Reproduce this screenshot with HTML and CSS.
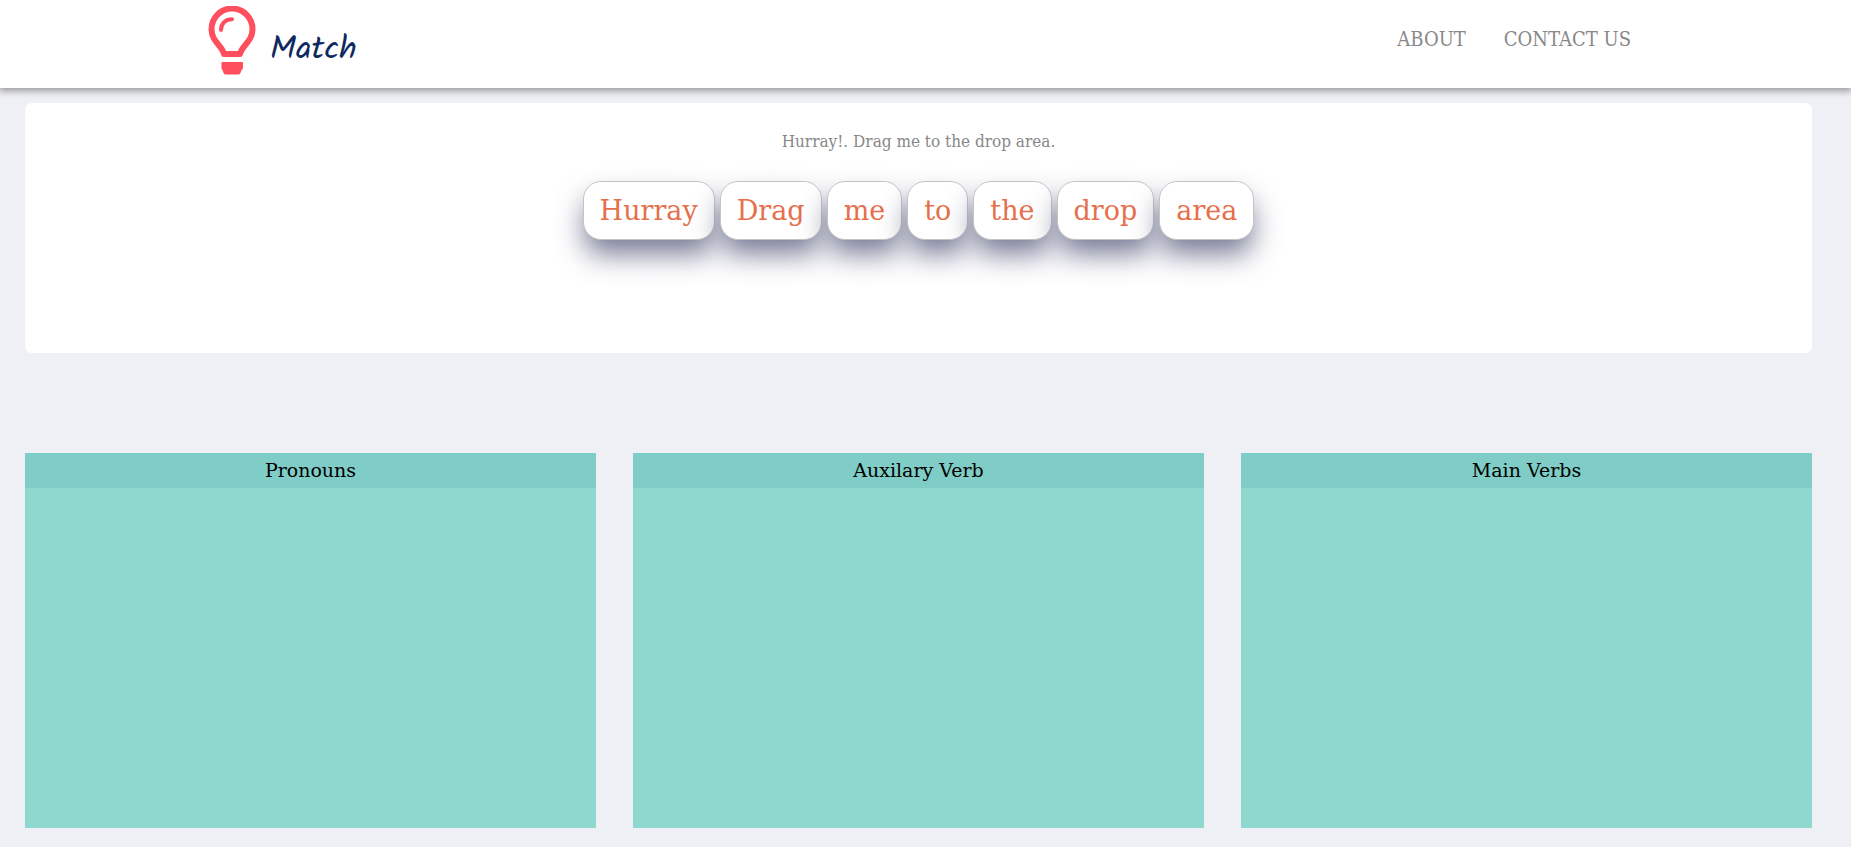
FILE: index.html
```html
<!DOCTYPE html>
<html lang="en">
<head>
<meta charset="utf-8">
<meta name="viewport" content="width=device-width, initial-scale=1">
<title>Match</title>
<link rel="stylesheet" href="styles.css">
</head>
<body>
<header class="site-header">
  <a class="brand" href="#">
    <svg class="brand-icon" viewBox="0 0 48 70" aria-hidden="true">
      <path d="M16 48C14 39 3.500 36 3.500 23A20.500 20.500 0 0 1 44.500 23C44.500 36 34 39 32 48Z" fill="none" stroke="#ff4f5e" stroke-width="6" stroke-linejoin="round"/>
      <path d="M13 24C13 17 18 13.200 24 13.200" fill="none" stroke="#ff4f5e" stroke-width="4" stroke-linecap="round"/>
      <path d="M14 56H34Q35 56 35 57V62Q35 63.500 33.500 64L32.500 67Q32 68.500 30 68.500H18Q16 68.500 15.500 67L14.500 64Q13.500 63.500 13.500 62V56.500Q13.500 56 14 56Z" fill="#ff4f5e"/>
    </svg>
    <span class="brand-name">Match</span>
  </a>
  <nav class="site-nav">
    <a href="#about">ABOUT</a>
    <a href="#contact">CONTACT US</a>
  </nav>
</header>
<main class="board">
  <section class="sentence">
    <p class="sentence-text">Hurray!. Drag me to the drop area.</p>
    <div class="words">
      <button class="word" type="button" draggable="true">Hurray</button>
      <button class="word" type="button" draggable="true">Drag</button>
      <button class="word" type="button" draggable="true">me</button>
      <button class="word" type="button" draggable="true">to</button>
      <button class="word" type="button" draggable="true">the</button>
      <button class="word" type="button" draggable="true">drop</button>
      <button class="word" type="button" draggable="true">area</button>
    </div>
  </section>
  <div class="drop-areas">
    <section class="drop-area"><h2 class="drop-title">Pronouns</h2></section>
    <section class="drop-area"><h2 class="drop-title">Auxilary Verb</h2></section>
    <section class="drop-area"><h2 class="drop-title">Main Verbs</h2></section>
  </div>
</main>
</body>
</html>
```
FILE: styles.css
```css
* { box-sizing: border-box; }

body {
  margin: 0;
  background: #eff0f6;
  font-family: "Roboto Slab", "DejaVu Serif", serif;
}

.site-header {
  display: flex;
  justify-content: space-between;
  align-items: flex-start;
  min-height: 88px;
  padding: 6px 220px 0 208px;
  background: #fff;
  box-shadow: 0 2px 7px 1px #999;
}

.brand {
  display: flex;
  color: #0f2a5f;
  text-decoration: none;
}

.brand-icon {
  width: 48px;
  height: 70px;
}

.brand-name {
  padding: 23px 0 0 14px;
  font-family: Kalam, cursive;
  font-size: 33px;
  line-height: 44px;
}

.site-nav {
  display: flex;
  gap: 38px;
  padding-top: 19px;
}

.site-nav a {
  color: #888;
  font-family: "Roboto Slab", "DejaVu Serif Condensed", "DejaVu Serif", serif;
  font-size: 20px;
  font-weight: 300;
  line-height: 28px;
  text-decoration: none;
}

.board {
  padding: 15px 39px 19px 25px;
}

.sentence {
  min-height: 250px;
  padding-top: 24px;
  border-radius: 7px;
  background: #fff;
  text-align: center;
}

.sentence-text {
  margin: 0;
  color: #888;
  font-family: "Roboto Slab", "DejaVu Serif Condensed", "DejaVu Serif", serif;
  font-size: 17px;
  line-height: 28px;
}

.words {
  display: flex;
  flex-wrap: wrap;
  justify-content: center;
  gap: 5px;
  padding-top: 26px;
}

.word {
  height: 59px;
  padding: 0 16px;
  border: 1px solid #c4c4c4;
  border-radius: 18px;
  background: #fff;
  box-shadow: 0 16px 28px -2px rgba(60, 65, 104, 0.7);
  color: #e6704c;
  font-family: inherit;
  font-size: 27px;
  cursor: grab;
}

.drop-areas {
  display: grid;
  grid-template-columns: repeat(3, 1fr);
  gap: 37px;
  padding-top: 100px;
}

.drop-area {
  min-height: 375px;
  background: #8fd8d0;
}

.drop-title {
  margin: 0;
  background: #7fcdc6;
  color: #000;
  font-size: 19px;
  font-weight: 400;
  line-height: 35px;
  text-align: center;
}
```
